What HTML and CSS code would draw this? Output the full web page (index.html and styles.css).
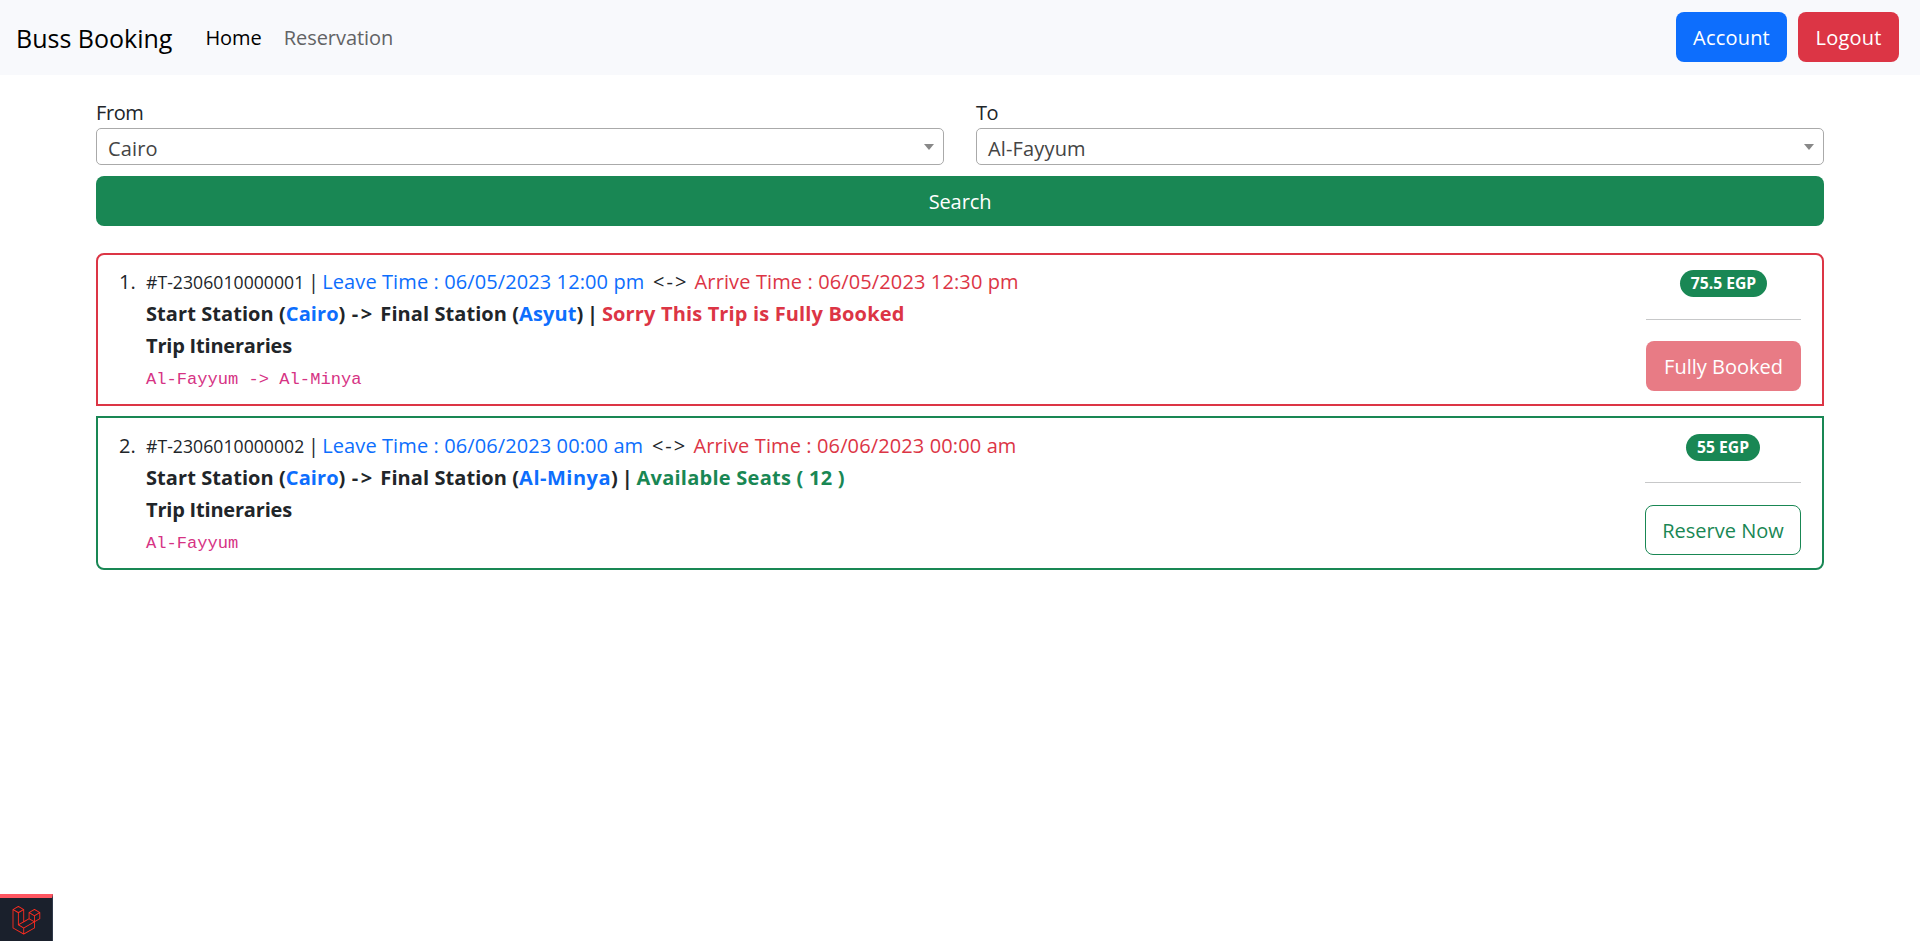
FILE: index.html
```html
<!DOCTYPE html>
<html lang="en">
<head>
<meta charset="utf-8">
<title>Buss Booking</title>
<link rel="stylesheet" href="styles.css">
</head>
<body>
<nav class="navbar">
  <a class="brand">Buss Booking</a>
  <a class="nav-link active">Home</a>
  <a class="nav-link">Reservation</a>
  <div class="nav-actions">
    <button class="btn btn-primary">Account</button>
    <button class="btn btn-danger">Logout</button>
  </div>
</nav>
<main class="container">
  <form class="search-form">
    <div class="fields">
      <div class="field">
        <label>From</label>
        <div class="select"><span>Cairo</span><i class="arrow"></i></div>
      </div>
      <div class="field">
        <label>To</label>
        <div class="select"><span>Al-Fayyum</span><i class="arrow"></i></div>
      </div>
    </div>
    <button type="button" class="btn btn-success btn-block">Search</button>
  </form>
  <section class="trips">
    <article class="trip trip-full">
      <div class="number">1.</div>
      <div class="details">
        <div class="line"><small>#T-2306010000001</small> <span class="sep">|</span> <span class="leave">Leave Time : 06/05/2023 12:00 pm</span> <span class="between">&lt;-&gt;</span> <span class="arrive">Arrive Time : 06/05/2023 12:30 pm</span></div>
        <div class="line stations">Start Station (<span class="blue">Cairo</span>) <span class="to">-&gt;</span> Final Station (<span class="blue">Asyut</span>) <span class="sep">|</span> <span class="red">Sorry This Trip is Fully Booked</span></div>
        <div class="line heading">Trip Itineraries</div>
        <div class="line"><code>Al-Fayyum -&gt; Al-Minya</code></div>
      </div>
      <div class="booking">
        <span class="badge">75.5 EGP</span>
        <hr>
        <button class="btn btn-danger" disabled>Fully Booked</button>
      </div>
    </article>
    <article class="trip trip-open">
      <div class="number">2.</div>
      <div class="details">
        <div class="line"><small>#T-2306010000002</small> <span class="sep">|</span> <span class="leave">Leave Time : 06/06/2023 00:00 am</span> <span class="between">&lt;-&gt;</span> <span class="arrive">Arrive Time : 06/06/2023 00:00 am</span></div>
        <div class="line stations">Start Station (<span class="blue">Cairo</span>) <span class="to">-&gt;</span> Final Station (<span class="blue wide">Al-Minya</span>) <span class="sep">|</span> <span class="green">Available Seats ( 12 )</span></div>
        <div class="line heading">Trip Itineraries</div>
        <div class="line"><code>Al-Fayyum</code></div>
      </div>
      <div class="booking">
        <span class="badge">55 EGP</span>
        <hr>
        <button class="btn btn-outline">Reserve Now</button>
      </div>
    </article>
  </section>
</main>
<div class="debugbar">
  <svg width="29" height="29" viewBox="0 0 50 52"><path fill="#ff2d20" d="M49.626 11.564a.809.809 0 0 1 .028.209v10.972a.8.8 0 0 1-.402.694l-9.209 5.302V39.25c0 .286-.152.55-.4.694L20.42 51.01c-.044.025-.092.041-.14.058-.018.006-.035.017-.054.022a.805.805 0 0 1-.41 0c-.022-.006-.042-.018-.063-.026-.044-.016-.09-.03-.132-.054L.402 39.944A.801.801 0 0 1 0 39.25V6.334c0-.072.01-.142.028-.21.006-.023.02-.044.028-.067.015-.042.029-.085.051-.124.015-.026.037-.047.055-.071.023-.032.044-.065.071-.093.023-.023.053-.04.079-.06.029-.024.055-.05.088-.069h.001l9.61-5.533a.802.802 0 0 1 .8 0l9.61 5.533h.002c.032.02.059.045.088.068.026.02.055.038.078.06.028.029.048.062.072.094.017.024.04.045.054.071.023.04.036.082.052.124.008.023.022.044.028.068a.809.809 0 0 1 .028.209v20.559l8.008-4.611v-10.51c0-.07.01-.141.028-.208.007-.024.02-.045.028-.068.016-.042.03-.085.052-.124.015-.026.037-.047.054-.071.024-.032.044-.065.072-.093.023-.023.052-.04.078-.06.03-.024.056-.05.088-.069h.001l9.611-5.533a.801.801 0 0 1 .8 0l9.61 5.533c.034.02.06.045.09.068.025.02.054.038.077.06.028.029.048.062.072.094.018.024.04.045.054.071.023.039.036.082.052.124.009.023.022.044.028.068zm-1.574 10.718v-9.124l-3.363 1.936-4.646 2.675v9.124l8.01-4.611zm-9.61 16.505v-9.13l-4.57 2.61-13.05 7.448v9.216l17.62-10.144zM1.602 7.719v31.068L19.22 48.93v-9.214l-9.204-5.209-.003-.002-.004-.002c-.031-.018-.057-.044-.086-.066-.025-.02-.054-.036-.076-.058l-.002-.003c-.026-.025-.044-.056-.066-.084-.02-.027-.044-.05-.06-.078l-.001-.003c-.018-.03-.029-.066-.042-.1-.013-.03-.03-.058-.038-.09v-.001c-.01-.038-.012-.078-.016-.117-.004-.03-.012-.06-.012-.09v-21.483L4.965 9.654 1.602 7.72zm8.81-5.994L2.405 6.334l8.005 4.609 8.006-4.61-8.006-4.608zm4.164 28.764l4.645-2.674V7.719l-3.363 1.936-4.646 2.675v20.096l3.364-1.937zM39.243 7.164l-8.006 4.609 8.006 4.609 8.005-4.61-8.005-4.608zm-.801 10.605l-4.646-2.675-3.363-1.936v9.124l4.645 2.674 3.364 1.937v-9.124zM20.02 38.33l11.743-6.704 5.87-3.35-8-4.606-9.211 5.303-8.395 4.833 7.993 4.524z"/></svg>
</div>
</body>
</html>
```
FILE: styles.css
```css
* { box-sizing: border-box; }
body {
  margin: 0;
  background: #fff;
  color: #212529;
  font-family: "Open Sans", sans-serif;
  font-size: 20px;
  line-height: 32px;
}
.navbar {
  display: flex;
  align-items: center;
  height: 75px;
  padding: 0 21px 0 16px;
  background: #f8f9fc;
}
.brand { margin-right: 33px; color: #000; font-size: 25px; }
.nav-link { margin-right: 22px; color: #626365; letter-spacing: -0.05px; }
.nav-link.active { color: #000; }
.nav-actions { display: flex; gap: 11px; margin: -1px 0 0 auto; }
.btn {
  height: 50px;
  padding: 1px 15px 0;
  border: 1px solid transparent;
  border-radius: 8px;
  color: #fff;
  font: inherit;
  line-height: 47px;
  white-space: nowrap;
}
.btn-primary { width: 111px; background: #0d6efd; letter-spacing: 0.2px; }
.btn-danger { width: 101px; background: #dc3545; letter-spacing: 0.2px; }
.btn-success { background: #198754; letter-spacing: -0.1px; }
.btn-outline { border-color: #198754; background: #fff; color: #198754; }
.btn:disabled { opacity: 0.65; letter-spacing: 0; }
.btn-block { display: block; width: 100%; }
.container { padding: 22px 96px 0; }
.fields { display: grid; grid-template-columns: 1fr 1fr; gap: 32px; margin-bottom: 11px; }
.field label { display: block; height: 31px; letter-spacing: -0.4px; }
.select {
  display: flex;
  align-items: center;
  justify-content: space-between;
  height: 37px;
  padding: 4px 9px 0 11px;
  border: 1px solid #aaa;
  border-radius: 5px;
  color: #444;
  letter-spacing: 0.15px;
}
.arrow {
  margin-top: -4px;
  border: 5px solid transparent;
  border-top: 6px solid #888;
  border-bottom: 0;
}
.trips { display: grid; gap: 10px; margin-top: 27px; }
.trip {
  display: grid;
  grid-template-columns: 27px 1fr auto;
  height: 153px;
  padding: 11px 21px 9px 21px;
  border: 2px solid;
}
.trip-full { border-color: #dc3545; border-radius: 8px 8px 0 0; }
.trip-open { height: 154px; border-color: #198754; border-radius: 0 0 8px 8px; padding-top: 12px; }
.line { height: 32px; white-space: nowrap; }
.line small { font-size: 17.6px; letter-spacing: 0.05px; }
.sep { margin: 0 -2px 0 -1.5px; }
.leave { color: #0d6efd; letter-spacing: 0.1px; }
.arrive { color: #dc3545; letter-spacing: 0.12px; }
.between { margin: 0 1px 0 3.5px; letter-spacing: 2px; }
.stations { font-weight: 700; letter-spacing: 0.07px; }
.stations .sep { margin: 0 -1.5px; }
.to { margin: 0 0.5px 0 1px; letter-spacing: 2.5px; }
.heading { font-weight: 700; letter-spacing: -0.2px; }
.blue { color: #0d6efd; }
.wide { letter-spacing: 0.5px; }
.red { color: #dc3545; letter-spacing: 0.15px; }
.green { color: #198754; letter-spacing: 0.25px; }
code {
  display: block;
  color: #d63384;
  font-family: "Liberation Mono", monospace;
  font-size: 17.1px;
  line-height: 36px;
}
.booking { display: flex; flex-direction: column; align-items: center; padding-top: 4px; }
.badge {
  height: 27px;
  padding: 0 11px;
  border-radius: 14px;
  background: #198754;
  color: #fff;
  font-size: 15.7px;
  font-weight: 700;
  line-height: 27px;
}
.booking hr { width: 100%; height: 1px; margin: 22px 0 21px; border: 0; background: #c7c8c9; }
.trip-open hr { margin: 21px 0 22px; }
.booking .btn { width: 155px; }
.booking .btn-outline { width: 156px; }
.debugbar {
  position: fixed;
  bottom: 0;
  left: 0;
  width: 53px;
  height: 47px;
  padding: 8px 0 0 12px;
  border-top: 4px solid #ff5661;
  border-right: 1px solid #303a4b;
  background: #1a202c;
}
.debugbar svg { display: block; }
```
